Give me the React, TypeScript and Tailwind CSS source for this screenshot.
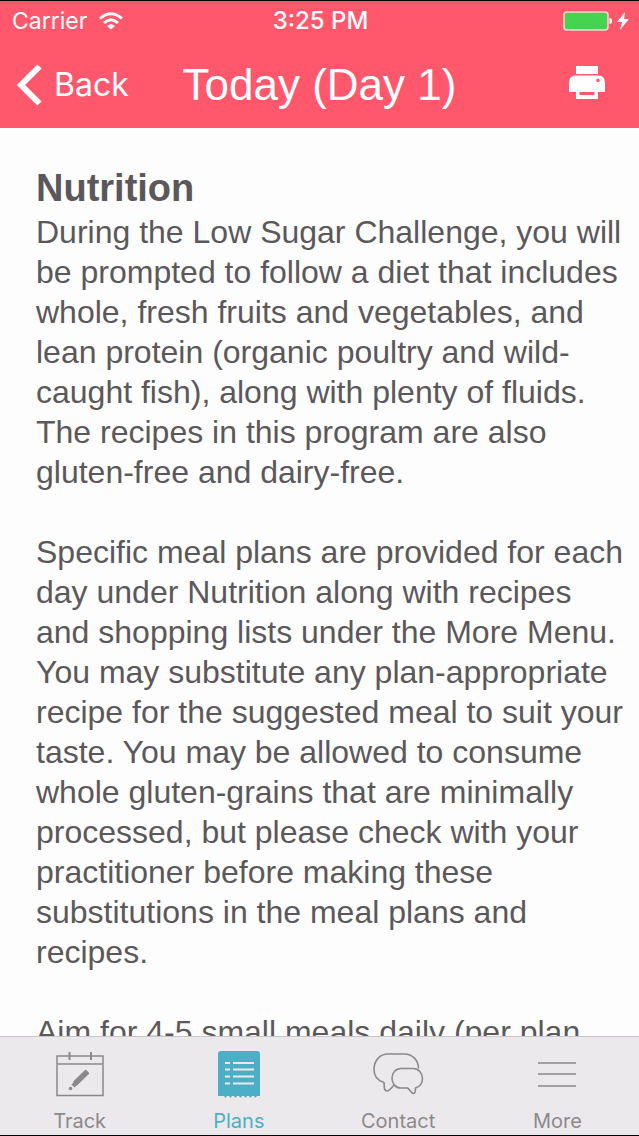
import React, { useState } from "react";

const TrackIcon = () => (
  <svg viewBox="0 0 50 48" className="w-[50px] h-12" fill="none" stroke="currentColor">
    <path d="M2 5h46v39.500H2zM2 13h46" strokeWidth="1.500" />
    <path d="M14.500 1v8M36 1v8" strokeWidth="2" />
    <path d="M18 35 32.500 20.500" strokeWidth="4.500" />
    <path d="M20 32.500 32.500 20.500" strokeWidth="5.500" />
    <circle cx="15.500" cy="37.500" r="1.800" fill="currentColor" stroke="none" />
  </svg>
);

const PlansIcon = () => (
  <svg viewBox="0 0 44 48" className="w-11 h-12" fill="none">
    <path
      d="M4 0h36q3 0 3 3v42h-3l-1.500 2-1.500-2h-2l-1.500 2-1.500-2h-2l-1.500 2-1.500-2h-2l-1.500 2-1.500-2h-2l-1.500 2-1.500-2h-2l-1.500 2-1.500-2h-2l-1.500 2-1.500-2H1V3q0-3 3-3z"
      fill="currentColor"
    />
    <path
      d="M8 12h5M16 12h21M8 18.500h5M16 18.500h21M8 25.500h5M16 25.500h21M8 32.500h5M16 32.500h21"
      stroke="#ebe9eb"
      strokeWidth="2"
    />
  </svg>
);

const ContactIcon = () => (
  <svg
    viewBox="0 0 52 48"
    className="w-[52px] h-12"
    fill="none"
    stroke="currentColor"
    strokeWidth="1.6"
    strokeLinejoin="round"
  >
    <path d="M22 34c-2.500 3-4.500 6-7 6-3.500 0-2.500-4-3-8.500C5.500 29.500 2 24.500 2 18.500 2 9.500 8 3 16 3h16c8.500 0 14.500 6 14.500 14.500" />
    <path d="M29 17.500h12c5.500 0 9.500 4.500 9.500 10 0 4.500-2.500 8-7 9.500 0 2.500 0 5.500-2 5.500s-3.500-4-6-5.500H29c-5.500 0-9-4.500-9-9.700s3.500-9.800 9-9.800z" />
  </svg>
);

const MoreIcon = () => (
  <svg viewBox="0 0 38 48" className="w-[38px] h-12" stroke="currentColor" strokeWidth="1.6">
    <path d="M0 12h38M0 23h38M0 35h38" />
  </svg>
);

const tabs = [
  { name: "Track", Icon: TrackIcon },
  { name: "Plans", Icon: PlansIcon },
  { name: "Contact", Icon: ContactIcon },
  { name: "More", Icon: MoreIcon },
];

const StatusBar = () => (
  <div className="grid grid-cols-3 items-center h-10 px-3 pr-2.5 font-['Inter',sans-serif]">
    <div className="flex items-center gap-3 text-[23px]">
      <span>Carrier</span>
      <svg viewBox="0 0 24 18" className="w-6 h-[18px]" fill="none" stroke="currentColor" strokeWidth="2.800">
        <path d="M1 6.500q11-9.500 22 0M5 11q7-6.500 14 0" />
        <path d="M12 17.500 8 14q4-3.500 8 0z" fill="currentColor" stroke="none" />
      </svg>
    </div>
    <span className="text-center text-2xl font-medium">3:25 PM</span>
    <div className="flex items-center justify-end gap-1">
      <svg viewBox="0 0 50 20" className="w-[50px] h-5">
        <rect x="1" y="1" width="44" height="18" rx="3" fill="#45d351" stroke="#ffd5d5" strokeWidth="1.500" />
        <path d="M46.500 7q2.500 0 2.500 3t-2.500 3z" fill="#fff" />
      </svg>
      <svg viewBox="0 0 12 18" className="w-3 h-[18px]" fill="currentColor">
        <path d="M8 0 0 10h5l-2 8 9-11H7z" />
      </svg>
    </div>
  </div>
);

export default function App() {
  const [active, setActive] = useState("Plans");

  return (
    <div className="flex flex-col h-dvh bg-[#fefdfe] border-y border-black text-[#5b585b] font-['Liberation_Sans',Arial,sans-serif]">
      <header className="shrink-0 bg-[#ff586d] text-white">
        <StatusBar />
        <div className="grid grid-cols-[1fr_auto_1fr] items-center h-[87px] px-4">
          <button className="flex items-center gap-3 font-['Inter',sans-serif] text-[32px] cursor-pointer">
            <svg viewBox="0 0 26 42" className="w-[26px] h-[42px]" fill="none" stroke="currentColor" strokeWidth="6">
              <path d="M23.500 2.500 5 21l18.500 18.500" />
            </svg>
            Back
          </button>
          <h1 className="text-[44px] whitespace-nowrap">Today (Day 1)</h1>
          <button aria-label="Print" className="justify-self-end mr-[18px] mb-1 cursor-pointer">
            <svg viewBox="0 0 36 34" className="w-9 h-[34px]" fill="currentColor">
              <path d="M7 0h22v8H7z" />
              <path
                fillRule="evenodd"
                d="M7 9.500h22q7 0 7 7V26h-7v7H7v-7H0v-9.500q0-7 7-7zM10.500 26v3h15v-3zM29 12.500a1.800 1.800 0 1 0 .01 0z"
              />
            </svg>
          </button>
        </div>
      </header>

      <main className="flex-1 min-h-0 overflow-y-auto [scrollbar-width:none] pl-9 pr-4 pt-10 text-[32px] leading-10">
        <h2 className="text-[38px] leading-10 font-bold pb-1">Nutrition</h2>
        <p className="mb-10">
          During the Low Sugar Challenge, you will be prompted to follow a diet
          that includes whole, fresh fruits and vegetables, and lean protein
          (organic poultry and wild-caught fish), along with plenty of fluids.
          The recipes in this program are also gluten-free and dairy-free.
        </p>
        <p className="mb-10">
          Specific meal plans are provided for each day under Nutrition along
          with recipes and shopping lists under the More Menu. You may
          substitute any plan-appropriate recipe for the suggested meal to suit
          your taste. You may be allowed to consume whole gluten-grains that are
          minimally processed, but please check with your practitioner before
          making these substitutions in the meal plans and recipes.
        </p>
        <p>Aim for 4-5 small meals daily (per plan</p>
      </main>

      <nav className="shrink-0 grid grid-cols-4 h-[99px] pt-3.5 pr-0.5 bg-[#ebe9eb] border-t border-[#c8c6c8] font-['Inter',sans-serif] text-xl">
        {tabs.map(({ name, Icon }) => (
          <button
            key={name}
            onClick={() => setActive(name)}
            className={`flex flex-col items-center gap-2 cursor-pointer ${
              active === name ? "text-[#4bb0c6]" : "text-[#8b898b]"
            }`}
          >
            <Icon />
            <span>{name}</span>
          </button>
        ))}
      </nav>
    </div>
  );
}
